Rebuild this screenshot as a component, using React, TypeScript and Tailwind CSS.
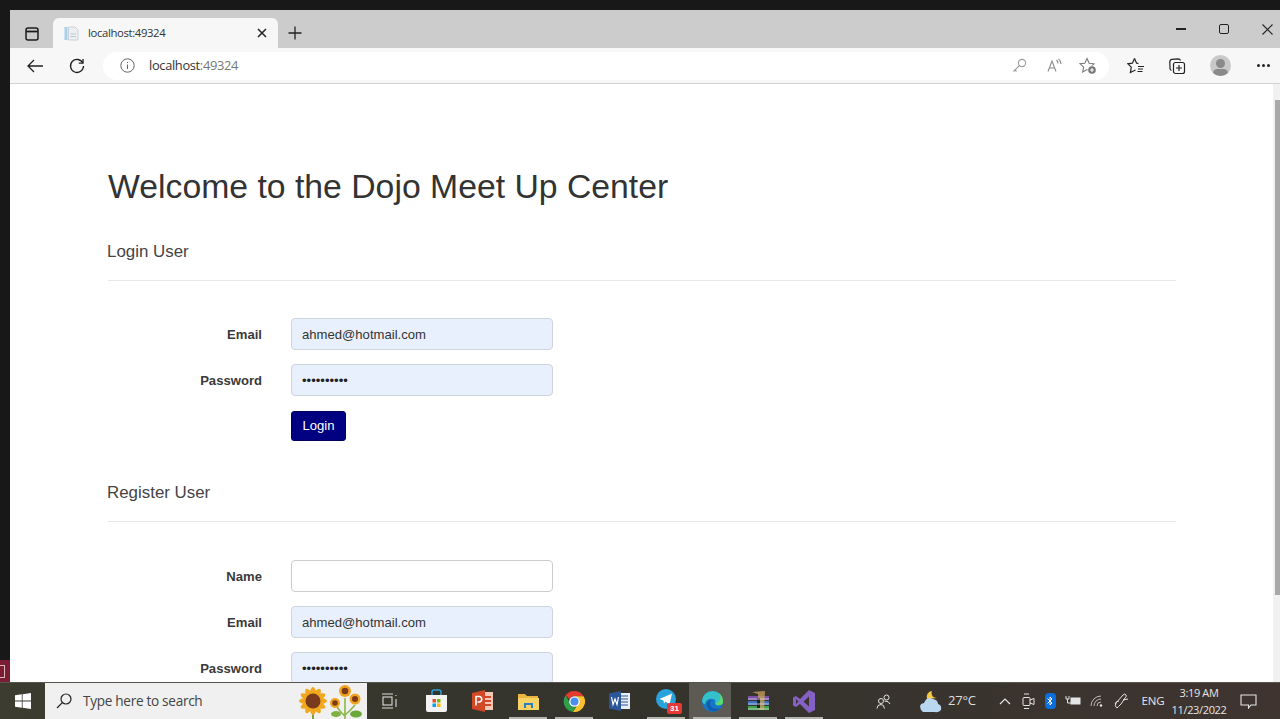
import React from "react";

function Field({ label, value, filled, dots }: { label: string; value?: string; filled?: boolean; dots?: boolean }) {
  return (
    <div className="flex items-center h-[32px] mb-[14px]">
      <label className="w-[154px] pt-[1px] text-right font-bold text-[13.1px] text-[#3a3a3a]">{label}</label>
      <div className={`ml-[29px] w-[262px] h-[32px] rounded-[4px] border flex items-center pl-[10px] pr-[11px] pt-[1px] text-[13.1px] text-[#333] ${filled ? "bg-[#e8f0fe] border-[#cfd4dc]" : "bg-white border-[#ccc]"}`}>
        {dots ? <span className="text-[#222]">{"••••••••••"}</span> : value}
      </div>
    </div>
  );
}

function Legend({ children, className }: { children: string; className: string }) {
  return (
    <div className={`text-[16.9px] leading-[20px] text-[#444] border-b border-[#e8e8e8] ${className}`}>
      <span className="-ml-[1px]">{children}</span>
    </div>
  );
}

function Slot({ w, line, active, children }: { w: number; line?: boolean; active?: boolean; children: React.ReactNode }) {
  return (
    <div className="relative h-full flex items-center justify-center shrink-0" style={{ width: w }}>
      {active && <div className="absolute left-0 right-[4px] top-0 bottom-0 bg-[#5c5a52]" />}
      <div className="relative flex items-center justify-center">{children}</div>
      {line && <div className={`absolute bottom-0 left-[4px] h-[2px] bg-[#b5b5b0] ${active ? "right-[4px] left-0" : "right-[4px]"}`} />}
    </div>
  );
}

function Sunflowers() {
  return (
    <svg width="68" height="36" viewBox="0 0 68 36" className="shrink-0">
      <path d="M14 20 V37" stroke="#7aa53a" strokeWidth="2" />
      <g fill="#f2a81d">
        {[0, 30, 60, 90, 120, 150].map((r) => (
          <ellipse key={r} cx="14" cy="18" rx="4" ry="14" transform={`rotate(${r} 14 18)`} />
        ))}
      </g>
      <circle cx="14" cy="18" r="7.5" fill="#7a3a1c" />
      <path d="M46 15 V37 M38 24 Q42 30 46 33 M56 22 Q51 28 46 32" stroke="#8db84a" strokeWidth="1.6" fill="none" />
      <ellipse cx="37" cy="31" rx="5" ry="3" fill="#7db243" />
      <ellipse cx="57" cy="31" rx="6" ry="3.5" fill="#6ba83a" />
      {[[46, 8, 6], [36, 20, 5], [56, 16, 5.5]].map(([x, y, r], i) => (
        <g key={i}>
          <circle cx={x} cy={y} r={r} fill="#f0a31e" />
          <circle cx={x} cy={y} r={r * 0.55} fill="#7a3a1c" />
        </g>
      ))}
    </svg>
  );
}

export default function App() {
  return (
    <div className="w-[1280px] h-[719px] overflow-hidden flex flex-col bg-[#181818] font-['Liberation_Sans',Arial,sans-serif]">
      <div className="flex-1 min-h-0 flex">
        <div className="w-[10px] flex flex-col justify-end shrink-0">
          <div className="h-[22px] w-[10px] bg-[#7c1c34] flex items-center">
            <div className="w-[5px] h-[13px] border border-l-0 border-[#d9b9c0]" />
          </div>
        </div>
        <div className="flex-1 min-w-0 flex flex-col pt-[10px]">
          {/* Tab strip */}
          <div className="h-[38px] bg-[#cccccc] flex items-end shrink-0">
            <div className="w-[43px] h-[30px] flex items-center justify-center">
              <svg width="14" height="14" viewBox="0 0 14 14" fill="none" className="mt-[1px]">
                <rect x="1" y="1" width="12" height="12" rx="2" stroke="#1c1c1c" strokeWidth="1.5" />
                <path d="M1 4.5 H13" stroke="#1c1c1c" strokeWidth="1.8" />
              </svg>
            </div>
            <div className="w-[225px] h-[30px] bg-[#f7f7f7] rounded-t-[6px] flex items-center pl-[11px] pr-[11px]">
              <svg width="15" height="15" viewBox="0 0 15 15" fill="none">
                <rect x="0.5" y="1" width="3" height="13" fill="#a9d0ea" />
                <path d="M4.5 1 H11 L14 4 V14 H4.5 Z" fill="#eceff2" stroke="#c9d2da" />
                <path d="M6.5 8 H12 M6.5 10.5 H12" stroke="#bcc8d2" />
              </svg>
              <span className="ml-[9px] text-[11.3px] text-[#333] font-['Open_Sans',sans-serif] tracking-[-0.35px]">localhost:49324</span>
              <svg width="10" height="10" viewBox="0 0 10 10" className="ml-auto" stroke="#222" strokeWidth="1.5">
                <path d="M1 1 L9 9 M9 1 L1 9" />
              </svg>
            </div>
            <div className="w-[34px] h-[30px] flex items-center justify-center">
              <svg width="14" height="14" viewBox="0 0 14 14" stroke="#222" strokeWidth="1.3">
                <path d="M7 0.5 V13.5 M0.5 7 H13.5" />
              </svg>
            </div>
            <div className="flex-1" />
            <div className="h-full flex items-center">
              <div className="w-[43px] flex justify-center">
                <div className="w-[10px] h-[1.5px] bg-[#222]" />
              </div>
              <div className="w-[43px] flex justify-center">
                <div className="w-[10px] h-[10px] border-[1.3px] border-[#222] rounded-[2px]" />
              </div>
              <div className="w-[35px] flex justify-end pr-[7px]">
                <svg width="11" height="11" viewBox="0 0 11 11" stroke="#222" strokeWidth="1.1">
                  <path d="M0.5 0.5 L10.5 10.5 M10.5 0.5 L0.5 10.5" />
                </svg>
              </div>
            </div>
          </div>

          {/* Toolbar */}
          <div className="h-[36px] bg-[#f7f7f7] border-b border-[#d2d2d2] flex items-center shrink-0 box-border">
            <div className="w-[51px] flex justify-center pr-[1px]">
              <svg width="17" height="14" viewBox="0 0 17 14" fill="none" stroke="#222" strokeWidth="1.3">
                <path d="M16 7 H1 M7 1 L1 7 L7 13" />
              </svg>
            </div>
            <div className="w-[32px] flex justify-center">
              <svg width="16" height="16" viewBox="0 0 16 16" fill="none" stroke="#222" strokeWidth="1.3">
                <path d="M13.8 5 A6.5 6.5 0 1 0 14.5 8" />
                <path d="M14 1 V5.2 H9.8" />
              </svg>
            </div>
            <div className="ml-[10px] w-[1006px] h-[28px] bg-white rounded-[14px] flex items-center pl-[17px] pr-[12px]">
              <svg width="15" height="15" viewBox="0 0 15 15" fill="none" stroke="#666">
                <circle cx="7.5" cy="7.5" r="6.7" />
                <path d="M7.5 6.5 V11 M7.5 4 V5" />
              </svg>
              <span className="ml-[14px] mt-[1px] text-[12.9px] font-['Open_Sans',sans-serif] tracking-[-0.35px] text-[#333]">
                localhost<span className="text-[#777]">:49324</span>
              </span>
              <div className="ml-auto flex items-center gap-[19px]">
                <svg width="15" height="15" viewBox="0 0 15 15" fill="none" stroke="#9a9a9a" strokeWidth="1.1" className="mr-[1px]">
                  <circle cx="10" cy="5" r="3.6" />
                  <path d="M7.5 7.5 L1.5 13.5 M3 12 L4.5 13.5" />
                </svg>
                <svg width="15" height="15" viewBox="0 0 15 15" fill="none" stroke="#8c8c8c" strokeWidth="1.1">
                  <path d="M1 13.5 L5 3 L9 13.5 M2.5 10 H7.5" />
                  <path d="M9.5 2 Q11 3.5 11 5.5 M11.5 0.8 Q14 3 14 6" />
                </svg>
                <svg width="18" height="18" viewBox="0 0 18 18" fill="none" stroke="#777" strokeWidth="1.1" className="-ml-[2px]">
                  <path d="M8 1.5 L10.2 6.2 L15 6.8 L11.4 10.2 L12.3 15 L8 12.6 L3.7 15 L4.6 10.2 L1 6.8 L5.8 6.2 Z" />
                  <circle cx="13" cy="13" r="4.6" fill="#fff" stroke="none" />
                  <circle cx="13" cy="13" r="3.8" fill="#777" stroke="none" />
                  <path d="M13 11 V15 M11 13 H15" stroke="#fff" />
                </svg>
              </div>
            </div>
            <div className="ml-[17px] w-[20px] flex justify-center">
              <svg width="18" height="18" viewBox="0 0 18 18" fill="none" stroke="#222" strokeWidth="1.2">
                <path d="M7.5 1.5 L9.6 6.2 L11.5 6.4 M5.4 6.2 L1 6.8 L4.3 10.2 L3.4 15.5 L8.5 13 M5.4 6.2 L7.5 1.5 M11 9.5 H17 M11 12 H16 M10.5 14.5 H15.5" />
              </svg>
            </div>
            <div className="ml-[21px] w-[20px] flex justify-center">
              <svg width="18" height="18" viewBox="0 0 18 18" fill="none" stroke="#222" strokeWidth="1.2">
                <rect x="5.5" y="5.5" width="11" height="11" rx="2" />
                <path d="M11 8 V14 M8 11 H14" />
                <path d="M3.5 13.5 Q2 13 2 11.5 L1.8 5 Q1.8 2.5 4 2.3 L10 1.8 Q12 1.8 12.5 3.5" />
              </svg>
            </div>
            <div className="ml-[23px] w-[21px] h-[21px] rounded-full bg-[#c9c9c9] overflow-hidden relative shrink-0">
              <div className="absolute left-[6px] top-[4px] w-[9px] h-[9px] rounded-full bg-[#8a8a8a]" />
              <div className="absolute left-[3px] top-[14px] w-[15px] h-[9px] rounded-full bg-[#8a8a8a]" />
            </div>
            <div className="ml-[26px] flex gap-[2px]">
              <div className="w-[3px] h-[3px] rounded-full bg-[#222]" />
              <div className="w-[3px] h-[3px] rounded-full bg-[#222]" />
              <div className="w-[3px] h-[3px] rounded-full bg-[#222]" />
            </div>
          </div>

          {/* Page */}
          <div className="flex-1 min-h-0 bg-white flex overflow-hidden">
            <div className="flex-1 min-w-0 pl-[98px] pr-[97px]">
              <h1 className="mt-[82px] text-[33.75px] leading-[40px] text-[#333]">Welcome to the Dojo Meet Up Center</h1>
              <Legend className="mt-[36px] pb-[18px] mb-[37px]">Login User</Legend>
              <div className="h-[140px] flex flex-col">
                <Field label="Email" value="ahmed@hotmail.com" filled />
                <Field label="Password" filled dots />
                <div className="mt-[1px] ml-[183px] w-[55px] h-[30px] bg-[#000080] rounded-[3px] border border-[#00005a] text-white text-[13.1px] flex items-center justify-center">Login</div>
              </div>
              <Legend className="mt-[25px] pb-[18px] mb-[38px]">Register User</Legend>
              <Field label="Name" />
              <Field label="Email" value="ahmed@hotmail.com" filled />
              <Field label="Password" filled dots />
            </div>
            <div className="w-[7px] bg-[#f1f1f1] shrink-0 flex flex-col items-end">
              <div className="h-[16px]" />
              <div className="h-[495px] w-[5px] bg-[#a8a8a8]" />
            </div>
          </div>
        </div>
      </div>

      {/* Taskbar */}
      <div className="h-[37px] bg-[linear-gradient(90deg,#3c3c30,#33332c_50%,#3f3430)] border-t border-[#55554e] flex items-stretch shrink-0 box-border">
        <Slot w={45}>
          <svg width="16" height="16" viewBox="0 0 16 16" fill="#fff">
            <path d="M0 2.3 L6.8 1.3 V7.5 H0 Z M7.6 1.2 L16 0 V7.5 H7.6 Z M0 8.4 H6.8 V14.7 L0 13.7 Z M7.6 8.4 H16 V16 L7.6 14.8 Z" />
          </svg>
        </Slot>
        <div className="w-[322px] bg-[#f0f0f0] flex items-center shrink-0 pl-[11px]">
          <svg width="16" height="16" viewBox="0 0 16 16" fill="none" stroke="#222" strokeWidth="1.2">
            <circle cx="10" cy="6" r="5" />
            <path d="M6.3 9.7 L1 15" />
          </svg>
          <span className="ml-[11px] text-[13.6px] text-[#444] font-['Open_Sans',sans-serif] tracking-[-0.3px]">Type here to search</span>
          <div className="ml-auto"><Sunflowers /></div>
        </div>
        <Slot w={46}>
          <svg width="16" height="16" viewBox="0 0 16 16" fill="none" stroke="#ddd" strokeWidth="1.1">
            <rect x="1" y="4" width="9" height="8" />
            <path d="M0 1 H11 M0 15 H11 M14 2 V3 M14 6 V14" />
          </svg>
        </Slot>
        <Slot w={46}>
          <svg width="23" height="24" viewBox="0 0 23 24">
            <path d="M7 7 V3 Q7 1 9 1 H14 Q16 1 16 3 V7" fill="none" stroke="#2aa3d6" strokeWidth="1.5" />
            <path d="M1 6 H22 V21 Q22 23 20 23 H3 Q1 23 1 21 Z" fill="#f3f3f3" />
            <rect x="7.5" y="10" width="3.5" height="3.5" fill="#e8532b" />
            <rect x="12" y="10" width="3.5" height="3.5" fill="#7fba00" />
            <rect x="7.5" y="14.5" width="3.5" height="3.5" fill="#00a4ef" />
            <rect x="12" y="14.5" width="3.5" height="3.5" fill="#ffb900" />
          </svg>
        </Slot>
        <Slot w={46}>
          <svg width="22" height="22" viewBox="0 0 22 22" className="ml-[2px]">
            <path d="M9 2 H21 V20 H9 Z" fill="#f6c9b6" />
            <path d="M12 6 H19 V8 H12 Z M12 10 H19 V12 H12 Z M12 14 H19 V16 H12 Z" fill="#d24726" />
            <path d="M0 3 L13 0 V22 L0 19 Z" fill="#d24726" />
            <path d="M4 15.5 V6.5 H7.5 A2.8 2.8 0 0 1 7.5 12 H5.5" fill="none" stroke="#fff" strokeWidth="1.6" />
          </svg>
        </Slot>
        <Slot w={46} line>
          <svg width="21" height="19" viewBox="0 0 21 19">
            <path d="M0 2 H7 L9 4 H20 V18 H0 Z" fill="#e9b53f" />
            <path d="M0 6 H21 V18 H0 Z" fill="#f8d265" />
            <path d="M6 16 V11 H15 V16 H13 V13 H8 V16 Z" fill="#2a7fc0" />
          </svg>
        </Slot>
        <Slot w={46} line>
          <svg width="23" height="23" viewBox="0 0 24 24" className="ml-[1px]">
            <path d="M12 1 A11 11 0 0 1 21.5 6.5 H12 A5.5 5.5 0 0 0 6.8 10 L2.8 5.5 A11 11 0 0 1 12 1 Z" fill="#e33b2e" />
            <path d="M2.8 5.5 L7.3 13.5 A5.5 5.5 0 0 0 13.5 17.3 L10.5 22.9 A11 11 0 0 1 2.8 5.5 Z" fill="#2f9e48" />
            <path d="M21.5 6.5 A11 11 0 0 1 10.5 22.9 L15.5 14.8 A5.5 5.5 0 0 0 16 8.5 L12 6.5 Z" fill="#fbc02d" />
            <circle cx="12" cy="12" r="5.5" fill="#fff" />
            <circle cx="12" cy="12" r="4.2" fill="#4a8ff0" />
          </svg>
        </Slot>
        <Slot w={46}>
          <svg width="22" height="20" viewBox="0 0 22 20">
            <path d="M8 2 H21 V18 H8 Z" fill="#e8eef8" />
            <path d="M11 5 H19 M11 8 H19 M11 11 H19 M11 14 H19" stroke="#2b579a" />
            <path d="M0 2.5 L12 0 V20 L0 17.5 Z" fill="#2b579a" />
            <path d="M2.5 6 L4 13.5 L6 8 L8 13.5 L9.5 6" fill="none" stroke="#fff" strokeWidth="1.2" />
          </svg>
        </Slot>
        <Slot w={46} line>
          <div className="relative w-[23px] h-[25px] ml-[3px]">
            <svg width="20" height="20" viewBox="0 0 20 20" className="absolute left-0 top-0">
              <circle cx="10" cy="10" r="10" fill="#2aa3dc" />
              <path d="M3.5 10 L16 4.5 L13.5 15.5 L9.5 12.5 L8 14.5 L7.5 11.5 Z" fill="#fff" />
            </svg>
            <div className="absolute right-[-3px] bottom-0 w-[15px] h-[11px] bg-[#e53935] rounded-[2px] text-[8px] leading-[11px] text-white text-center font-bold">31</div>
          </div>
        </Slot>
        <Slot w={46} line active>
          <svg width="23" height="23" viewBox="0 0 24 24">
            <circle cx="12" cy="12" r="11" fill="#1677c9" />
            <path d="M1 12 A11 11 0 0 1 23 12 Q23 16 18 16 Q14 16 15 12 Q15 9 11 9 Q5 9 4 15 Q2 14 1 12 Z" fill="#35c1c9" />
            <path d="M6 14 Q8 10 11 11 Q8 13 10 17 Q13 21 20 19 Q16 23 11 22 Q6 20 6 14 Z" fill="#0f5cab" />
            <path d="M23 12 Q23 16 18 16 Q15 16 15 13 Q18 14 20 10 Q21 6 18 3 Q23 6 23 12 Z" fill="#5ed96a" />
          </svg>
        </Slot>
        <Slot w={46} line>
          <svg width="23" height="22" viewBox="0 0 23 22">
            <rect x="1" y="6" width="21" height="4" fill="#7b4fa8" />
            <rect x="1" y="11" width="21" height="4" fill="#3b6fc2" />
            <rect x="1" y="16" width="21" height="4" fill="#3fa34d" />
            <path d="M5 2 L18 1 L17 20 H12 L11 4 Z" fill="#c9a35a" opacity="0.75" />
            <rect x="10" y="8" width="3" height="10" fill="#222" />
            <path d="M1 9 H22 M1 14 H22 M1 19 H22" stroke="#ddd" strokeWidth="0.8" />
          </svg>
        </Slot>
        <Slot w={46} line>
          <svg width="22" height="23" viewBox="0 0 22 23">
            <path d="M16 0 L22 3 V20 L16 23 L7 14 L3 17 L0 15.5 V7.5 L3 6 L7 9 Z" fill="#8661c5" />
            <path d="M16 6.5 L10.5 11.5 L16 16.5 Z M3 9 V14 L5.5 11.5 Z" fill="#3a342f" />
          </svg>
        </Slot>
        <div className="flex-1" />
        <div className="flex items-center text-[#e8e8e8] shrink-0 pr-[9px]">
          <Slot w={30}>
            <svg width="15" height="15" viewBox="0 0 15 15" fill="none" stroke="#e5e5e5">
              <circle cx="5" cy="7" r="2.5" />
              <circle cx="10.5" cy="3.5" r="2.5" />
              <path d="M1 14.5 Q1 10.5 5 10.5 Q8 10.5 8.5 14.5 M8.5 7 Q13 7 14 10" />
            </svg>
          </Slot>
          <div className="w-[14px]" />
          <Slot w={36}>
            <svg width="24" height="23" viewBox="0 0 24 23">
              <path d="M9 9 A6 6 0 0 1 14 1 A5 5 0 0 0 19 8 Z" fill="#f6c945" />
              <path d="M3 20 Q0 14 6 13 Q9 6 15 9 Q20 10 20 14 Q24 15 23 20 Q20 23 17 22 H5 Z" fill="#b9d7f0" />
            </svg>
          </Slot>
          <span className="w-[27px] text-center whitespace-nowrap text-[13px] font-['Open_Sans',sans-serif] tracking-[-0.2px] text-[#dedede]">27°C</span>
          <div className="w-[18px]" />
          <Slot w={24}>
            <svg width="12" height="7" viewBox="0 0 12 7" fill="none" stroke="#e5e5e5" strokeWidth="1.2">
              <path d="M1 6 L6 1 L11 6" />
            </svg>
          </Slot>
          <Slot w={22}>
            <svg width="13" height="17" viewBox="0 0 13 17" fill="none" stroke="#e5e5e5">
              <rect x="1" y="4.5" width="7" height="8" rx="1" />
              <path d="M8 7 L12 5.5 V11.5 L8 10 M2 1 H7 M2 15.5 H7" />
            </svg>
          </Slot>
          <Slot w={22}>
            <div className="w-[11px] h-[16px] rounded-[4px] bg-[#0a6fdc] flex items-center justify-center">
              <svg width="6" height="10" viewBox="0 0 6 10" fill="none" stroke="#fff">
                <path d="M0.5 2.5 L5 7 L3 9 V1 L5 3 L0.5 7.5" />
              </svg>
            </div>
          </Slot>
          <Slot w={24}>
            <svg width="16" height="12" viewBox="0 0 16 12" fill="none" stroke="#e5e5e5">
              <rect x="6" y="3" width="9" height="6" fill="#e5e5e5" />
              <path d="M1 1 V4 H4 V1 M2.5 4 V8 H6" />
            </svg>
          </Slot>
          <Slot w={24}>
            <svg width="14" height="12" viewBox="0 0 14 12" fill="none" stroke="#bdbdbd">
              <path d="M1 11 A10 10 0 0 1 11 1 M4 11 A7 7 0 0 1 11 4 M7 11 A4 4 0 0 1 11 7" />
              <circle cx="11" cy="10.5" r="1.2" fill="#e5e5e5" stroke="none" />
            </svg>
          </Slot>
          <Slot w={24}>
            <svg width="16" height="16" viewBox="0 0 16 16" fill="none" stroke="#e5e5e5">
              <path d="M4 15 Q1 13 3 10 L10 2 Q12 0 13 2 Q14 3 12 5 L8 11 Q5 14 4 15 M10 7 L15 6 M6 8 Q3 8 2 11" />
            </svg>
          </Slot>
          <span className="w-[40px] text-center text-[11.5px] font-['Open_Sans',sans-serif] text-[#e5e5e5] tracking-[-0.2px]">ENG</span>
          <div className="w-[52px] flex flex-col items-center whitespace-nowrap text-[11px] leading-[17px] font-['Open_Sans',sans-serif] text-[#e5e5e5] tracking-[-0.35px]">
            <div>3:19 AM</div>
            <div>11/23/2022</div>
          </div>
          <Slot w={46}>
            <svg width="17" height="15" viewBox="0 0 17 15" fill="none" stroke="#e5e5e5" strokeWidth="1.1">
              <path d="M1 1 H16 V11 H11 L8.5 14 V11 H1 Z" />
            </svg>
          </Slot>
        </div>
      </div>
    </div>
  );
}
